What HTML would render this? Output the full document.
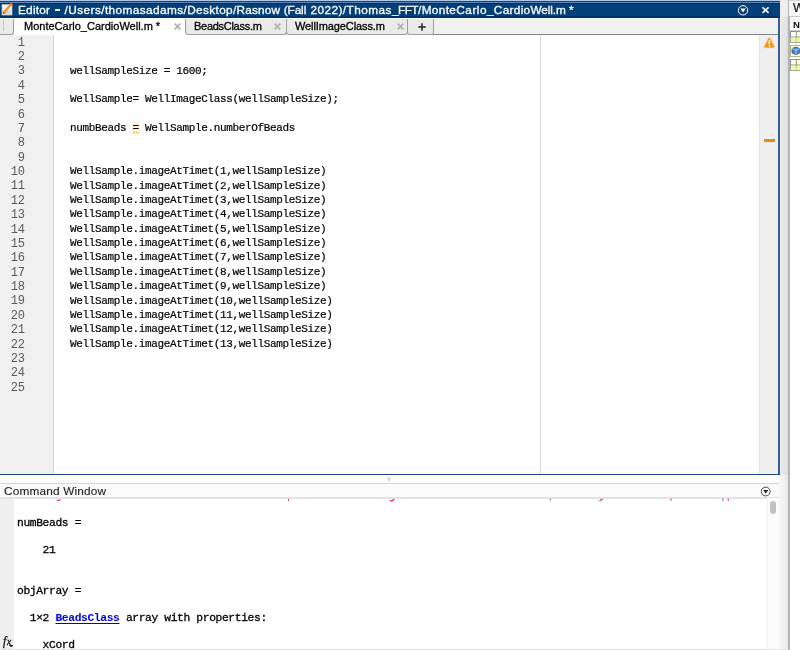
<!DOCTYPE html>
<html><head><meta charset="utf-8">
<style>
*{margin:0;padding:0;box-sizing:border-box}
html,body{width:800px;height:650px;overflow:hidden;background:#e6e6e6;font-family:"Liberation Sans",sans-serif;}
.abs{position:absolute}
#title,.tabt,#nums,#code,#cwt span,#cwtext{will-change:transform}
/* title bar */
#title{left:0;top:0;width:780px;height:19px;background:linear-gradient(#b0c8e8 0,#b0c8e8 0.8px,#1d4477 0.8px,#1d4477 1.6px,#5f86b8 1.6px,#5f86b8 3px,#00306a 3px,#00306a 3.8px,#034079 3.8px,#034079 16px,#00336b 16px,#00336b 17.6px,#fff 17.6px);color:#fff;white-space:nowrap}
#title b{position:absolute;top:1.6px;font-weight:normal;font-size:11.8px;line-height:17px;-webkit-text-stroke:0.3px #fff}
/* tab row */
#tabs{left:0;top:19px;width:778px;height:16px;background:#f1f0f0}
#tabline{left:433px;top:33.8px;width:345px;height:1px;background:#7f838a}
.tab{position:absolute;height:15.7px;background:#eaeaea;border:1px solid #9c9c9c;border-top:none;border-radius:0 0 3.5px 3.5px}
.tabt{position:absolute;top:17.6px;font-size:11px;line-height:16px;color:#000;white-space:nowrap;-webkit-text-stroke:0.3px #000}
#atab{left:13.5px;top:18px;width:172px;height:17px;background:#fff}
.cx{position:absolute;top:22.5px;width:7px;height:7px}
/* editor */
#ed{left:0;top:34.5px;width:778px;height:439px;background:#fff}
#gut{left:0;top:0;width:54.4px;height:439px;background:#f0f0f0;border-right:1px solid #d6d6d6}
.mono{font-family:"Liberation Mono",monospace;font-size:11px;letter-spacing:-0.35px;white-space:pre;color:#000;-webkit-text-stroke:0.2px #000}
#nums{left:0;top:0.5px;padding-top:0.65px;width:24.6px;text-align:right;color:#5a5a5a;line-height:14.375px;font-family:"Liberation Mono",monospace;font-size:12px;letter-spacing:-0.3px;white-space:pre}
#code{left:70.4px;top:-0.5px;padding-top:0.78px;line-height:14.375px}
#margin{left:539.5px;top:0;width:1px;height:439px;background:#d9d9d9}
#msg{left:759px;top:0;width:19px;height:439px;background:#efefef;border-left:1px solid #e2e2e2}
#bR{left:778px;top:18px;width:2px;height:457px;background:#2f5f97}
#bB{left:0;top:473.8px;width:780px;height:1.3px;background:#1f4379}
/* command window */
#cwt{left:0;top:483px;width:779px;height:16px;background:linear-gradient(#fafafa 0,#fafafa 12.5px,#e3e3e3 12.8px,#e3e3e3 14.5px,#fff 14.8px);border-top:1px solid #d6d6d6;color:#222}
#cwt span{position:absolute;left:3.8px;top:-1px;font-size:11.8px;line-height:16px;letter-spacing:0.19px;-webkit-text-stroke:0.12px #222}
#cw{left:0;top:498.5px;width:779px;height:151px;background:#fff;overflow:hidden}
#cwg{left:0;top:0;width:13.5px;height:151px;background:#efefef}
#cwtext{left:17px;top:-9.5px;padding-top:0.58px;line-height:13.56px;font-size:11.3px;letter-spacing:-0.375px;-webkit-text-stroke:0.3px #000}
</style></head><body>
<div class="abs" id="title"><b style="left:18.00px;letter-spacing:0.245px">Editor</b><b style="left:54.8px;top:9.3px;width:5px;height:1.3px;background:#fff"></b><b style="left:64.50px;letter-spacing:0.443px">/Users</b><b style="left:101.25px;letter-spacing:0.406px">/thomasadams</b><b style="left:183.50px;letter-spacing:0.367px">/Desktop</b><b style="left:233.00px;letter-spacing:0.199px">/Rasnow</b><b style="left:283.70px;letter-spacing:-0.087px">(Fall</b><b style="left:310.60px;letter-spacing:0.403px">2022)</b><b style="left:342.80px;letter-spacing:0.471px">/Thomas</b><b style="left:392.00px;letter-spacing:-0.547px">_FFT</b><b style="left:418.00px;letter-spacing:0.370px">/Monte</b><b style="left:456.30px;letter-spacing:0.499px">Carlo</b><b style="left:487.00px;letter-spacing:0.312px">_Cardio</b><b style="left:530.50px;letter-spacing:-0.124px">Well.m</b><b style="left:569.10px;letter-spacing:0.000px">*</b></div>
<div class="abs" id="tabs"></div>
<div class="abs" id="tabline"></div>
<div class="abs tab" style="left:-2px;top:19px;width:15.7px"></div>
<div class="abs" style="left:3px;top:20px;width:1px;height:11px;background:#c4c4c4"></div>
<div class="abs" id="atab"></div>
<div class="abs tab" style="left:185px;top:19px;width:102px"></div>
<div class="abs tab" style="left:286px;top:19px;width:121.5px"></div>
<div class="abs tab" style="left:406.5px;top:19px;width:27.5px"></div>
<div class="tabt" style="left:24px">MonteCarlo_CardioWell.m *</div>
<div class="tabt" style="left:193.5px;letter-spacing:-0.28px">BeadsClass.m</div>
<div class="tabt" style="left:294.5px;letter-spacing:-0.1px">WellImageClass.m</div>
<svg class="cx" style="left:173.5px" viewBox="0 0 7 7"><path d="M0.7 0.7L6.3 6.3M6.3 0.7L0.7 6.3" stroke="#b2b2b2" stroke-width="1.8"/></svg>
<svg class="cx" style="left:273.5px" viewBox="0 0 7 7"><path d="M0.7 0.7L6.3 6.3M6.3 0.7L0.7 6.3" stroke="#b2b2b2" stroke-width="1.8"/></svg>
<svg class="cx" style="left:397px" viewBox="0 0 7 7"><path d="M0.7 0.7L6.3 6.3M6.3 0.7L0.7 6.3" stroke="#b2b2b2" stroke-width="1.8"/></svg>
<svg class="abs" style="left:418px;top:22.5px;width:8px;height:8px" viewBox="0 0 8 8"><path d="M4 0.3V7.7M0.3 4H7.7" stroke="#222" stroke-width="1.5"/></svg>
<div class="abs" id="ed">
 <div class="abs" id="gut"></div>
 <div class="abs" id="nums">1
2
3
4
5
6
7
8
9
10
11
12
13
14
15
16
17
18
19
20
21
22
23
24
25</div>
 <div class="abs" style="left:132.7px;top:86.5px;width:6.5px;height:12.5px;background:#fbf4d6"></div><div class="abs" style="left:133px;top:97.5px;width:6px;height:0;border-top:1px dotted #e8a850"></div>
 <div class="abs mono" id="code">

wellSampleSize = 1600;

WellSample= WellImageClass(wellSampleSize);

numbBeads = WellSample.numberOfBeads


WellSample.imageAtTimet(1,wellSampleSize)
WellSample.imageAtTimet(2,wellSampleSize)
WellSample.imageAtTimet(3,wellSampleSize)
WellSample.imageAtTimet(4,wellSampleSize)
WellSample.imageAtTimet(5,wellSampleSize)
WellSample.imageAtTimet(6,wellSampleSize)
WellSample.imageAtTimet(7,wellSampleSize)
WellSample.imageAtTimet(8,wellSampleSize)
WellSample.imageAtTimet(9,wellSampleSize)
WellSample.imageAtTimet(10,wellSampleSize)
WellSample.imageAtTimet(11,wellSampleSize)
WellSample.imageAtTimet(12,wellSampleSize)
WellSample.imageAtTimet(13,wellSampleSize)</div>
 <div class="abs" id="margin"></div>
 <div class="abs" id="msg"></div>
</div>
<div class="abs" id="bR"></div>
<div class="abs" id="bB"></div>
<div class="abs" style="left:0;top:474.9px;width:780px;height:9px;background:#fcfcfc"></div>
<div class="abs" id="cwt"><span>Command Window</span></div>
<div class="abs" id="cw">
 <div class="abs" id="cwg"></div>
 <div class="abs mono" id="cwtext">

numBeads =

    21


objArray =

  1×2 <b style="color:#0000e6;text-decoration:underline;text-underline-offset:1.5px;-webkit-text-stroke:0">BeadsClass</b> array with properties:

    xCord</div>
</div>

<!-- title icons -->
<svg class="abs" style="left:1px;top:3px;width:13px;height:13px" viewBox="0 0 13 13">
 <rect x="1" y="1.5" width="10" height="10.5" fill="#eef2f6" stroke="#c9b9a8" stroke-width="0.8"/>
 <rect x="2.5" y="7.5" width="7" height="3.5" fill="#c9d7e6"/>
 <path d="M2.2 10.2L10.6 0.8" stroke="#e8952e" stroke-width="2.2"/>
 <path d="M2.9 9.4L1.7 11.2L3.6 10.3Z" fill="#222"/>
 <path d="M10 0.6L11.6 1.9" stroke="#e46a5a" stroke-width="1.4"/>
</svg>
<svg class="abs" style="left:737.2px;top:3.6px;width:12px;height:12px" viewBox="0 0 12 12">
 <circle cx="6" cy="6.3" r="4.7" fill="none" stroke="#fff" stroke-width="1"/>
 <path d="M3.3 4.6H8.7L6 8.6Z" fill="#fff"/>
</svg>
<svg class="abs" style="left:761px;top:6px;width:9px;height:8px" viewBox="0 0 9 8">
 <path d="M1.5 1.4L7.6 6.8M7.6 1.4L1.5 6.8" stroke="#fff" stroke-width="1.6"/>
</svg>
<!-- message bar marks -->
<svg class="abs" style="left:763px;top:37px;width:13px;height:12px" viewBox="0 0 13 12">
 <path d="M6.3 0.8Q6.9 0.8 7.3 1.6L11.3 9.4Q11.7 10.8 10.5 10.8H2.1Q0.9 10.8 1.3 9.4L5.3 1.6Q5.7 0.8 6.3 0.8Z" fill="#f0961e" stroke="#f6c06a" stroke-width="0.6"/>
 <rect x="5.6" y="3.2" width="1.5" height="4" fill="#fff"/>
 <rect x="5.6" y="8" width="1.5" height="1.5" fill="#fff"/>
</svg>
<div class="abs" style="left:763.5px;top:138.5px;width:11.5px;height:3.5px;background:#f7d9a6;border-radius:1px"></div>
<div class="abs" style="left:764px;top:139px;width:10.5px;height:2.5px;background:#e8871e"></div>
<!-- splitter grips -->
<div class="abs" style="left:387.2px;top:477.3px;width:4.2px;height:4px;background:#dcdcdc;border-radius:2.1px"></div>
<div class="abs" style="left:782px;top:330px;width:3px;height:3px;background:#f2f2f2;border-radius:2px"></div>
<!-- cw title icon + scrollbar -->
<svg class="abs" style="left:760px;top:486px;width:12px;height:12px" viewBox="0 0 12 12">
 <circle cx="5.7" cy="5.5" r="4.4" fill="#fff" stroke="#333" stroke-width="0.9"/>
 <path d="M3.2 4H8.2L5.7 7.7Z" fill="#222"/>
</svg>
<div class="abs" style="left:767px;top:498px;width:12px;height:152px;background:#fcfcfc;border-left:1px solid #f0f0f0"></div>
<div class="abs" style="left:770px;top:500.5px;width:6px;height:13.5px;background:#c1c1c1;border-radius:3px"></div>
<svg class="abs" style="left:0;top:498px;width:779px;height:5px" viewBox="0 0 779 5">
 <g stroke="#d2232f" stroke-width="1.1" fill="none" opacity="0.9">
 <path d="M56.8 1.6Q58.5 3.4 60.4 1.4"/>
 <path d="M288.5 0.8V2.8"/>
 <path d="M389.8 2.5Q391.6 3.8 394.2 1.3" stroke-width="1.3"/>
 <path d="M550.5 0.8V2.2"/>
 <path d="M599.5 3L602.8 0.8"/>
 <path d="M671 0.8V2.8"/>
 <path d="M723 0.8V2.8M728.3 0.8V2.8"/>
 </g></svg>
<!-- fx -->
<div class="abs" style="left:2.9px;top:634.6px;font-family:'Liberation Serif',serif;font-style:italic;font-size:11.5px;line-height:12px;color:#111;will-change:transform;-webkit-text-stroke:0.3px #111">f</div><div class="abs" style="left:7.3px;top:636.3px;font-family:'Liberation Serif',serif;font-style:italic;font-size:9.5px;line-height:12px;color:#111;will-change:transform;-webkit-text-stroke:0.3px #111">x</div>
<svg class="abs" style="left:8.8px;top:644.8px;width:4.4px;height:2.7px" viewBox="0 0 5 3"><path d="M0 0H5L2.5 3Z" fill="#222"/></svg>
<!-- right strip + workspace panel -->
<div class="abs" style="left:780px;top:0;width:8px;height:650px;background:linear-gradient(90deg,#f6f6f6 0,#e7e7e7 18%,#e3e3e3 80%,#d6d6d6)"></div>
<div class="abs" style="left:780px;top:0;width:8.5px;height:17px;background:#efeded"></div>
<div class="abs" style="left:779px;top:475px;width:9px;height:175px;background:linear-gradient(90deg,#f7f7f7,#f0f0f0 60%,#e6e6e6)"></div>
<div class="abs" style="left:788px;top:0;width:12px;height:650px;background:#fff;border-left:2px solid #b4b4b4"></div>
<div class="abs" style="left:788.5px;top:0;width:11.5px;height:17px;background:#f5f5f5;border-top:1px solid #d8d8d8;border-bottom:1px solid #c4c4c4"></div>
<div class="abs" style="left:792.5px;top:1px;width:7.5px;overflow:hidden;font-size:12.5px;line-height:15px;color:#111;will-change:transform;-webkit-text-stroke:0.2px #111">W</div>
<div class="abs" style="left:790px;top:18px;width:10px;height:12.5px;background:#f7f7f7;border-bottom:1px solid #d0d0d0"></div>
<div class="abs" style="left:793px;top:18.5px;width:7px;overflow:hidden;font-size:9.5px;font-weight:bold;line-height:12px;color:#111;will-change:transform">N</div>
<svg class="abs" style="left:790px;top:31px;width:10px;height:41px" viewBox="0 0 10 41">
 <rect x="0.5" y="0.5" width="12" height="11" fill="#fbfbdc" stroke="#8890a0"/>
 <rect x="1" y="1" width="5" height="5" fill="#fff"/>
 <path d="M6.3 0.5V11.5M0.5 6H12" stroke="#8f9a86" stroke-width="1"/>
 <rect x="0.5" y="6.5" width="12" height="5" fill="#eef08a" opacity="0.6"/>
 <rect x="0.5" y="14.5" width="12" height="11" fill="#fdfde8" stroke="#b5b98a"/>
 <path d="M2 17.5L6 16L9.6 17.5V22L6 23.8L2 22Z" fill="#4f86c6" stroke="#2a5590" stroke-width="0.8"/>
 <path d="M2 17.5L6 19L9.6 17.5M6 19V23.8" stroke="#cfe0f4" stroke-width="0.7" fill="none"/>
 <rect x="0.5" y="28.5" width="12" height="11" fill="#fbfbdc" stroke="#8890a0"/>
 <rect x="1" y="29" width="5" height="5" fill="#fff"/>
 <path d="M6.3 28.5V39.5M0.5 34H12" stroke="#8f9a86" stroke-width="1"/>
 <rect x="0.5" y="34.5" width="12" height="5" fill="#eef08a" opacity="0.6"/>
</svg>
<!-- bottom line -->
<div class="abs" style="left:0;top:648.5px;width:788px;height:1.5px;background:#e2e2e2"></div>
</body></html>
